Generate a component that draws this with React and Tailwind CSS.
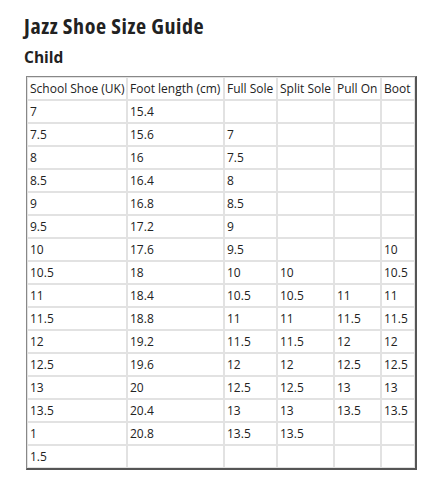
import React from 'react';

const rows = [
  ['7', '15.4', '', '', '', ''],
  ['7.5', '15.6', '7', '', '', ''],
  ['8', '16', '7.5', '', '', ''],
  ['8.5', '16.4', '8', '', '', ''],
  ['9', '16.8', '8.5', '', '', ''],
  ['9.5', '17.2', '9', '', '', ''],
  ['10', '17.6', '9.5', '', '', '10'],
  ['10.5', '18', '10', '10', '', '10.5'],
  ['11', '18.4', '10.5', '10.5', '11', '11'],
  ['11.5', '18.8', '11', '11', '11.5', '11.5'],
  ['12', '19.2', '11.5', '11.5', '12', '12'],
  ['12.5', '19.6', '12', '12', '12.5', '12.5'],
  ['13', '20', '12.5', '12.5', '13', '13'],
  ['13.5', '20.4', '13', '13', '13.5', '13.5'],
  ['1', '20.8', '13.5', '13.5', '', ''],
  ['1.5', '', '', '', '', ''],
];

const headers = ['School Shoe (UK)', 'Foot length (cm)', 'Full Sole', 'Split Sole', 'Pull On', 'Boot'];

const Cell = ({ children }) => (
  <td className="h-[23px] px-[2px] border border-[#e2e2e2] whitespace-nowrap overflow-hidden">{children}</td>
);

const App = () => {
  return (
    <div className="bg-white min-h-[480px] w-[435px] pl-6 pt-3 text-[#222]" style={{ fontFamily: '"Open Sans", sans-serif' }}>
      <h1 className="text-[22px] font-bold leading-[26px] tracking-[0.6px] [font-stretch:75%]">Jazz Shoe Size Guide</h1>
      <h2 className="text-[15.5px] font-bold leading-[20px] mt-[9px]">Child</h2>

      <table className="w-[388px] mt-[9px] ml-[2px] table-fixed border-separate border-spacing-0 border-t border-l border-[#888] border-r-2 border-b-2 border-r-[#555] border-b-[#555] text-[12px] leading-none">
        <colgroup>
          <col className="w-[100px]" />
          <col className="w-[97px]" />
          <col className="w-[53px]" />
          <col className="w-[57px]" />
          <col className="w-[47px]" />
          <col className="w-[34px]" />
        </colgroup>
        <thead>
          <tr>
            {headers.map((h) => (
              <Cell key={h}>{h}</Cell>
            ))}
          </tr>
        </thead>
        <tbody>
          {rows.map((r, ri) => (
            <tr key={ri}>
              {r.map((c, ci) => (
                <Cell key={ci}>{c}</Cell>
              ))}
            </tr>
          ))}
        </tbody>
      </table>
    </div>
  );
};

export default App;
